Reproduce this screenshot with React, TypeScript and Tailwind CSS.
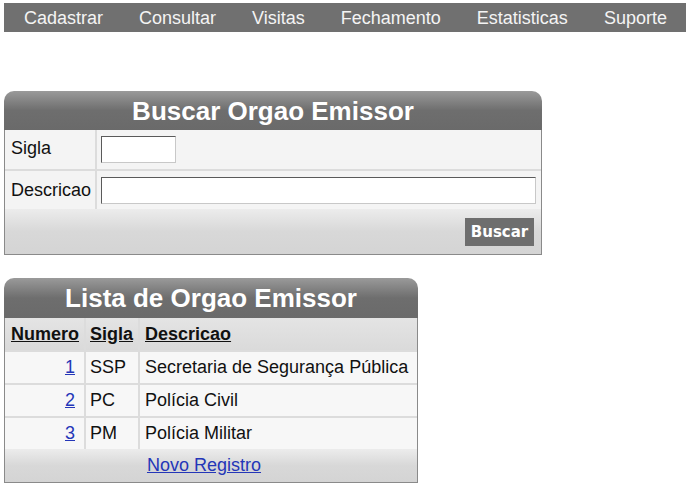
import React from 'react';

const menu = ['Cadastrar', 'Consultar', 'Visitas', 'Fechamento', 'Estatisticas', 'Suporte'];

const orgaos = [
  { id: 1, sigla: 'SSP', descricao: 'Secretaria de Segurança Pública' },
  { id: 2, sigla: 'PC', descricao: 'Polícia Civil' },
  { id: 3, sigla: 'PM', descricao: 'Polícia Militar' },
];

function PanelHeader({ title, tall }: { title: string; tall?: boolean }) {
  return (
    <div className={`${tall ? 'h-[40px]' : 'h-[39px]'} rounded-t-[10px] bg-gradient-to-b from-[#9a9a9a] via-[#6e6e6e] to-[#6a6a6a] flex items-center justify-center text-[26px] font-bold text-white leading-none`}>
      {title}
    </div>
  );
}

export default function App() {
  return (
    <div className="pt-[3px] px-[4px] bg-white min-h-[488px] text-[18px] text-[#111]" style={{ fontFamily: '"Liberation Sans", Arial, sans-serif' }}>
      {/* top menu */}
      <nav className="w-[682px] h-[29px] bg-[#707070] flex items-center pl-5 pt-[1px] gap-[36px] text-[#f4f4f4]">
        {menu.map((m) => (
          <span key={m}>{m}</span>
        ))}
      </nav>

      {/* search form */}
      <div className="w-[538px] mt-[59px]">
        <PanelHeader title="Buscar Orgao Emissor" />
        <div className="border-x border-b border-[#8a8a8a]">
          <div className="grid grid-cols-[90px_1fr] gap-[2px] bg-[#dcdcdc]">
            <div className="bg-[#f4f4f4] h-[39px] flex items-center pl-[6px] pb-[2px]">Sigla</div>
            <div className="bg-[#f4f4f4] h-[39px] flex items-center pl-[4px]">
              <input className="w-[75px] h-[27px] bg-white border border-[#c8c8c8] border-t-[#5a5a5a] border-l-[#5a5a5a] outline-none" />
            </div>
            <div className="bg-[#f4f4f4] h-[38px] flex items-center pl-[6px]">Descricao</div>
            <div className="bg-[#f4f4f4] h-[38px] flex items-center pl-[4px]">
              <input className="w-[435px] h-[27px] bg-white border border-[#c8c8c8] border-t-[#5a5a5a] border-l-[#5a5a5a] outline-none" />
            </div>
          </div>
          <div className="h-[45px] bg-gradient-to-b from-[#ececec] via-[#d8d8d8] to-[#d4d4d4] flex items-start justify-end pt-[9px] pr-[7px]">
            <button
              className="w-[69px] h-[28px] bg-[#6e6e6e] text-white font-bold text-[15px] flex items-center justify-center"
              style={{ fontFamily: '"DejaVu Sans", Verdana, sans-serif' }}
            >
              Buscar
            </button>
          </div>
        </div>
      </div>

      {/* list */}
      <div className="w-[414px] mt-[23px]">
        <PanelHeader title="Lista de Orgao Emissor" tall />
        <div className="border-x border-b border-[#8a8a8a]">
          <div className="grid grid-cols-[79px_52px_1fr] gap-[2px] bg-[#dcdcdc]">
            <div className="bg-gradient-to-b from-[#e4e4e4] to-[#dadada] h-[32px] flex items-center pl-[6px] font-bold underline">Numero</div>
            <div className="bg-gradient-to-b from-[#e4e4e4] to-[#dadada] h-[32px] flex items-center pl-[4px] font-bold underline">Sigla</div>
            <div className="bg-gradient-to-b from-[#e4e4e4] to-[#dadada] h-[32px] flex items-center pl-[5px] font-bold underline">Descricao</div>
            {orgaos.map((o) => (
              <React.Fragment key={o.id}>
                <div className="bg-[#f7f7f7] h-[31px] flex items-center justify-end pr-[9px]">
                  <a href="#" className="text-[#2436b8] underline">{o.id}</a>
                </div>
                <div className="bg-[#f7f7f7] h-[31px] flex items-center pl-[4px]">{o.sigla}</div>
                <div className="bg-[#f7f7f7] h-[31px] flex items-center pl-[5px]">{o.descricao}</div>
              </React.Fragment>
            ))}
          </div>
          <div className="h-[33px] bg-gradient-to-b from-[#ececec] via-[#d8d8d8] to-[#d4d4d4] flex items-center justify-center pr-[14px]">
            <a href="#" className="text-[#2436b8] underline">Novo Registro</a>
          </div>
        </div>
      </div>
    </div>
  );
}
